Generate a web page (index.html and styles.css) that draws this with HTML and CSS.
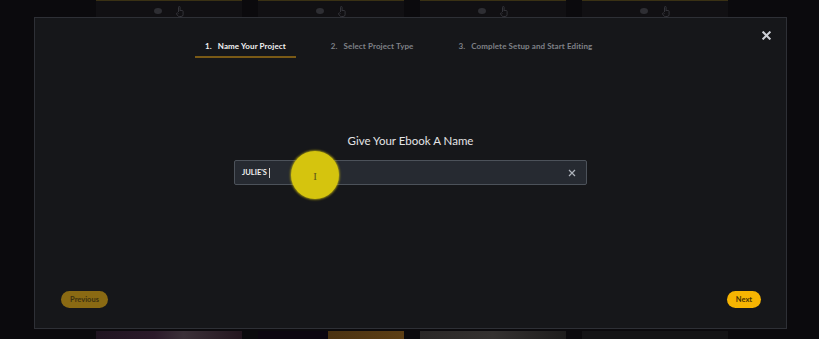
FILE: index.html
```html
<!DOCTYPE html>
<html lang="en">
<head>
    <meta charset="UTF-8">
    <title>New Ebook</title>
    <link rel="stylesheet" href="styles.css">
</head>
<body>
    <!-- Projekt-Raster im Hintergrund -->
    <div class="grid top-row">
        <div class="card"><span class="icons"><span class="eye"></span><svg class="hand" width="8" height="11" viewBox="0 0 8 11"><path d="M2.5 6 V1.3 a0.8 0.8 0 0 1 1.6 0 V5 M4.1 4.5 h2 a1 1 0 0 1 1 1 V8.5 a2 2 0 0 1 -2 2 H3.3 a2 2 0 0 1 -1.6 -0.8 L0.6 8 a0.8 0.8 0 0 1 1.2 -1 L2.5 7.5" fill="none" stroke="#38383d" stroke-width="0.9"/></svg></span></div>
        <div class="card"><span class="icons"><span class="eye"></span><svg class="hand" width="8" height="11" viewBox="0 0 8 11"><path d="M2.5 6 V1.3 a0.8 0.8 0 0 1 1.6 0 V5 M4.1 4.5 h2 a1 1 0 0 1 1 1 V8.5 a2 2 0 0 1 -2 2 H3.3 a2 2 0 0 1 -1.6 -0.8 L0.6 8 a0.8 0.8 0 0 1 1.2 -1 L2.5 7.5" fill="none" stroke="#38383d" stroke-width="0.9"/></svg></span></div>
        <div class="card"><span class="icons"><span class="eye"></span><svg class="hand" width="8" height="11" viewBox="0 0 8 11"><path d="M2.5 6 V1.3 a0.8 0.8 0 0 1 1.6 0 V5 M4.1 4.5 h2 a1 1 0 0 1 1 1 V8.5 a2 2 0 0 1 -2 2 H3.3 a2 2 0 0 1 -1.6 -0.8 L0.6 8 a0.8 0.8 0 0 1 1.2 -1 L2.5 7.5" fill="none" stroke="#38383d" stroke-width="0.9"/></svg></span></div>
        <div class="card"><span class="icons"><span class="eye"></span><svg class="hand" width="8" height="11" viewBox="0 0 8 11"><path d="M2.5 6 V1.3 a0.8 0.8 0 0 1 1.6 0 V5 M4.1 4.5 h2 a1 1 0 0 1 1 1 V8.5 a2 2 0 0 1 -2 2 H3.3 a2 2 0 0 1 -1.6 -0.8 L0.6 8 a0.8 0.8 0 0 1 1.2 -1 L2.5 7.5" fill="none" stroke="#38383d" stroke-width="0.9"/></svg></span></div>
    </div>
    <div class="grid bottom-row">
        <div class="thumb thumb-purple"></div>
        <div class="thumb thumb-split"></div>
        <div class="thumb thumb-grey"></div>
        <div class="thumb thumb-dark"></div>
    </div>

    <!-- Modal -->
    <div class="modal">
        <button class="close-btn">
            <svg width="9" height="9" viewBox="0 0 9 9"><path d="M1.3 1.3 L7.7 7.7 M7.7 1.3 L1.3 7.7" stroke="#cdd0d6" stroke-width="2" stroke-linecap="square"/></svg>
        </button>

        <div class="steps">
            <div class="step active"><span class="num">1.</span>Name Your Project</div>
            <div class="step"><span class="num">2.</span>Select Project Type</div>
            <div class="step"><span class="num">3.</span>Complete Setup and Start Editing</div>
        </div>

        <div class="content">
            <h2>Give Your Ebook A Name</h2>
            <div class="name-field">
                <span class="value">JULIE'S</span><span class="caret"></span>
                <svg class="clear" width="8" height="8" viewBox="0 0 8 8"><path d="M1 1 L7 7 M7 1 L1 7" stroke="#aeb3bb" stroke-width="1.2"/></svg>
            </div>
        </div>

        <div class="footer">
            <button class="btn btn-prev">Previous</button>
            <button class="btn btn-next">Next</button>
        </div>
    </div>

    <!-- Maus-Hervorhebung -->
    <div class="cursor-spot"><span class="ibeam">I</span></div>
</body>
</html>
```

FILE: styles.css
```css
body {
    margin: 0;
    width: 819px;
    height: 339px;
    background-color: #0b0a0d;
    font-family: Lato, "Open Sans", Arial, sans-serif;
    position: relative;
    overflow: hidden;
}

/* Hintergrund-Raster */
.grid {
    display: flex;
    gap: 16px;
    padding-left: 96px;
}

.top-row .card {
    width: 146px;
    height: 17px;
    background-color: #111013;
    border-top: 1px solid #3a3114;
    display: flex;
    justify-content: center;
}

.icons {
    display: flex;
    align-items: center;
    gap: 14px;
    margin-top: 4px;
    height: 12px;
}

.eye {
    width: 8px;
    height: 6px;
    border-radius: 50%;
    background-color: #2e2e33;
}

.bottom-row {
    margin-top: 313px;
}

.thumb {
    width: 146px;
    height: 9px;
}

.thumb-purple { background: linear-gradient(90deg, #1f1420, #2b1a2a 40%, #3a3038 60%, #24161f); }
.thumb-split { background: linear-gradient(90deg, #0c0610 48%, #4a3212 48%, #5c3e14); }
.thumb-grey { background: linear-gradient(90deg, #2a2827, #343130 50%, #1e1d1d); }
.thumb-dark { background-color: #141416; }

/* Modal */
.modal {
    position: absolute;
    left: 34px;
    top: 17px;
    width: 751px;
    height: 310px;
    background-color: #16171a;
    border: 1px solid #2e3036;
    display: flex;
    flex-direction: column;
}

.close-btn {
    position: absolute;
    top: 13px;
    right: 15px;
    background: none;
    border: none;
    padding: 0;
    line-height: 0;
}

.steps {
    display: flex;
    gap: 25px;
    padding-left: 160px;
    padding-top: 22px;
}

.step {
    padding: 0 10px 4px;
    font-size: 8px;
    line-height: 12px;
    font-weight: 700;
    letter-spacing: 0.1px;
    color: #7f8187;
    border-bottom: 2px solid transparent;
}

.step .num {
    margin-right: 6px;
}

.step.active {
    color: #f2f2f2;
    border-bottom-color: #7a5a16;
}

.content {
    flex: 1;
    display: flex;
    flex-direction: column;
    align-items: center;
    padding-top: 75px;
}

h2 {
    margin: 0 0 11px;
    font-size: 11.5px;
    line-height: 16px;
    font-weight: 400;
    color: #e4e4e6;
}

.name-field {
    width: 337px;
    height: 23px;
    padding: 0 7px;
    background-color: #262a31;
    border: 1px solid #4c525a;
    border-radius: 2px;
    display: flex;
    align-items: center;
}

.value {
    font-size: 7.5px;
    font-weight: 700;
    color: #f0f0f0;
}

.caret {
    width: 1px;
    height: 10px;
    margin-left: 2px;
    background-color: #d0d0d0;
}

.clear {
    margin-left: auto;
    margin-right: 3px;
}

.footer {
    display: flex;
    justify-content: space-between;
    padding: 0 25px 20px 26px;
}

.btn {
    height: 17px;
    border: none;
    border-radius: 9px;
    font-family: Lato, "Open Sans", Arial, sans-serif;
    font-size: 7.5px;
    font-weight: 700;
    padding: 0;
}

.btn-prev {
    width: 47px;
    background-color: #8a6a13;
    color: #3e3210;
}

.btn-next {
    width: 34px;
    background-color: #f6b402;
    color: #4a3300;
}

/* Gelber Kreis um den Mauszeiger */
.cursor-spot {
    position: absolute;
    left: 291px;
    top: 151px;
    width: 48px;
    height: 48px;
    border-radius: 50%;
    background-color: #d5c40e;
    box-shadow: 0 0 2px 1px rgba(213, 196, 14, 0.6);
    display: flex;
    align-items: center;
    justify-content: center;
}

.ibeam {
    font-family: "Liberation Serif", serif;
    font-size: 11px;
    color: #5f5618;
    margin-top: 2px;
}
```
